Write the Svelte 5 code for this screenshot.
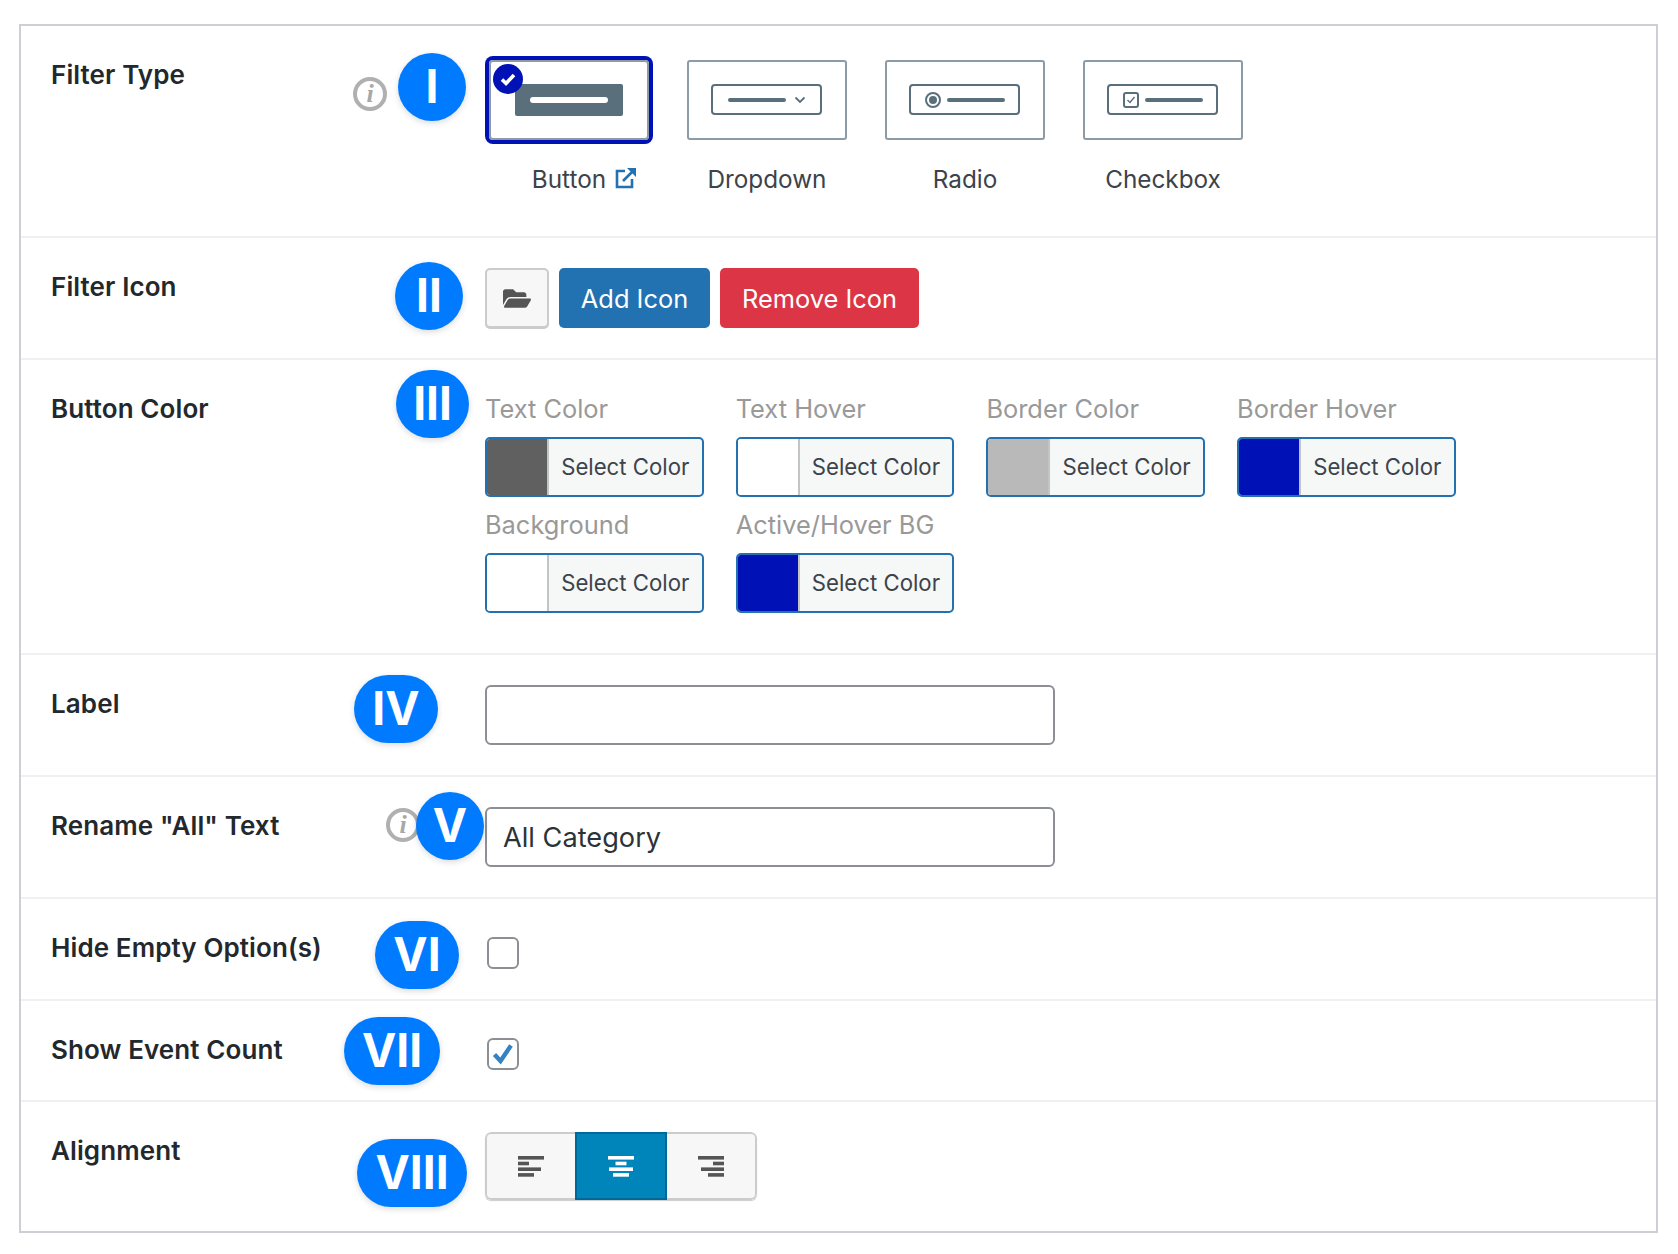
<script lang="ts">
  const filterTypes = ['Button', 'Dropdown', 'Radio', 'Checkbox'];

  const colors = [
    { label: 'Text Color', value: '#606060' },
    { label: 'Text Hover', value: '#ffffff' },
    { label: 'Border Color', value: '#b9b9b9' },
    { label: 'Border Hover', value: '#0012b5' },
    { label: 'Background', value: '#ffffff' },
    { label: 'Active/Hover BG', value: '#0012b5' }
  ];

  const alignBars = [
    [26, 11, 23, 16],
    [26, 11, 24, 16],
    [26, 11, 23, 16]
  ];

  // x offset of a bar inside the 26px wide icon, per alignment
  function barX(index: number, width: number) {
    if (index === 0) return 0;
    if (index === 1) return (26 - width) / 2;
    return 26 - width;
  }
</script>

<div class="panel">
  <section class="row row-type">
    <div class="label">Filter Type</div>
    <span class="info info-type">i</span>
    <span class="badge b1">I</span>
    <div class="types">
      {#each filterTypes as type, i}
        <div class="type">
          <div class="card" class:selected={i === 0}>
            {#if i === 0}
              <span class="tick">
                <svg width="30" height="30" viewBox="0 0 30 30">
                  <path d="M9 15.5l4 4 8-8.5" fill="none" stroke="#fff" stroke-width="3.6" />
                </svg>
              </span>
            {/if}
            <svg width="156" height="76" viewBox="2 2 156 76">
              {#if i === 0}
                <rect x="26" y="24" width="108" height="32" rx="2" fill="#5a6f7c" />
                <rect x="41" y="37" width="78" height="6" rx="3" fill="#fff" />
              {:else}
                <rect x="25" y="25" width="109" height="29" rx="3" fill="none" stroke="#5a6f7c" stroke-width="2" />
              {/if}
              {#if i === 1}
                <rect x="41" y="38" width="58" height="4" rx="2" fill="#5a6f7c" />
                <path d="M108.500 37.500l4.500 4.500 4.500-4.500" fill="none" stroke="#5a6f7c" stroke-width="1.800" />
              {:else if i === 2}
                <circle cx="48" cy="40" r="7" fill="none" stroke="#5a6f7c" stroke-width="2" />
                <circle cx="48" cy="40" r="4" fill="#5a6f7c" />
                <rect x="62" y="38" width="58" height="4" rx="2" fill="#5a6f7c" />
              {:else if i === 3}
                <rect x="41" y="33" width="14" height="14" rx="2" fill="none" stroke="#5a6f7c" stroke-width="2" />
                <path d="M44.500 40l2.500 2.500 4.500-5.500" fill="none" stroke="#5a6f7c" stroke-width="1.400" />
                <rect x="62" y="38" width="58" height="4" rx="2" fill="#5a6f7c" />
              {/if}
            </svg>
          </div>
          <div class="type-name">
            {type}
            {#if i === 0}
              <svg class="ext" width="22" height="22" viewBox="0 0 22 22">
                <path d="M10 4H2v16h15v-8" fill="none" stroke="#2271b1" stroke-width="2.600" />
                <path d="M8 14L18 4" fill="none" stroke="#2271b1" stroke-width="2.600" />
                <path d="M12 1h9v9z" fill="#2271b1" />
              </svg>
            {/if}
          </div>
        </div>
      {/each}
    </div>
  </section>

  <section class="row row-std">
    <div class="label">Filter Icon</div>
    <span class="badge b2">II</span>
    <div class="icon-actions">
      <button class="icon-btn" aria-label="Choose icon">
        <svg width="28" height="25" viewBox="0 0 576 512">
          <path fill="#555" d="M572.694 292.093L500.27 416.248A63.997 63.997 0 0 1 444.989 448H45.025c-18.523 0-30.064-20.093-20.731-36.093l72.424-124.155A64 64 0 0 1 152 256h399.964c18.523 0 30.064 20.093 20.73 36.093zM152 224h328v-48c0-26.51-21.49-48-48-48H272l-64-64H48C21.49 64 0 85.49 0 112v278.046l69.077-118.418C86.214 242.25 117.989 224 152 224z" />
        </svg>
      </button>
      <button class="action add">Add Icon</button>
      <button class="action remove">Remove Icon</button>
    </div>
  </section>

  <section class="row row-color">
    <div class="label">Button Color</div>
    <span class="badge b3">III</span>
    <div class="colors">
      {#each colors as color}
        <div class="color">
          <div class="color-label">{color.label}</div>
          <div class="picker">
            <span class="swatch" style="background: {color.value}"></span>
            <span class="picker-text">Select Color</span>
          </div>
        </div>
      {/each}
    </div>
  </section>

  <section class="row row-std">
    <div class="label">Label</div>
    <span class="badge b4">IV</span>
    <input class="text-input" type="text" />
  </section>

  <section class="row row-std">
    <div class="label">Rename "All" Text</div>
    <span class="info info-rename">i</span>
    <span class="badge b5">V</span>
    <input class="text-input" type="text" value="All Category" />
  </section>

  <section class="row row-hide">
    <div class="label">Hide Empty Option(s)</div>
    <span class="badge b6">VI</span>
    <span class="checkbox"></span>
  </section>

  <section class="row row-count">
    <div class="label">Show Event Count</div>
    <span class="badge b7">VII</span>
    <span class="checkbox">
      <svg width="28" height="28" viewBox="0 0 28 28">
        <path d="M5.500 14.500l6 6.500L22 5.500" fill="none" stroke="#3582c4" stroke-width="4.400" />
      </svg>
    </span>
  </section>

  <section class="row row-align">
    <div class="label">Alignment</div>
    <span class="badge b8">VIII</span>
    <div class="align-group">
      {#each alignBars as bars, i}
        <button class="align" class:active={i === 1} aria-label="Align">
          <svg width="26" height="21" viewBox="0 0 26 21">
            {#each bars as width, n}
              <rect x={barX(i, width)} y={n * 5.700} {width} height="3.600" fill="currentColor" />
            {/each}
          </svg>
        </button>
      {/each}
    </div>
  </section>
</div>

<style>
  :global(body) {
    margin: 0;
    background: #fff;
    font-family: Inter, "Liberation Sans", sans-serif;
  }

  .panel {
    box-sizing: border-box;
    width: 1639px;
    margin: 24px 0 0 19px;
    border: 2px solid #ccd0d4;
  }

  .row {
    position: relative;
    box-sizing: border-box;
    display: grid;
    grid-template-columns: 434px 1fr;
    align-items: start;
    padding: 30px 0 0 30px;
    border-bottom: 2px solid #f0f0f1;
  }

  .row:last-child {
    border-bottom: 0;
  }

  .row-type {
    height: 212px;
  }

  .row-std {
    height: 122px;
  }

  .row-color {
    height: 295px;
  }

  .row-hide {
    height: 102px;
  }

  .row-count {
    height: 101px;
  }

  .row-align {
    height: 129px;
  }

  .label {
    padding-top: 2px;
    font-size: 26px;
    line-height: 34px;
    font-weight: 600;
    color: #23282d;
    letter-spacing: 0.1px;
  }

  .badge {
    position: absolute;
    box-sizing: border-box;
    height: 68px;
    padding-bottom: 3px;
    border-radius: 34px;
    display: flex;
    align-items: center;
    justify-content: center;
    background: #007bff;
    box-shadow: 0 2px 6px rgba(0, 0, 0, 0.15);
    color: #fff;
    font-size: 46px;
    font-weight: 700;
    line-height: 1;
  }

  .b1 { left: 377px; top: 27px; width: 68px; }
  .b2 { left: 374px; top: 24px; width: 68px; }
  .b3 { left: 375px; top: 10px; width: 73px; }
  .b4 { left: 333px; top: 20px; width: 84px; }
  .b5 { left: 395px; top: 15px; width: 68px; }
  .b6 { left: 354px; top: 22px; width: 84px; }
  .b7 { left: 323px; top: 16px; width: 96px; }
  .b8 { left: 336px; top: 37px; width: 110px; }

  .info {
    position: absolute;
    box-sizing: border-box;
    width: 34px;
    height: 34px;
    border: 4px solid #b0b0b0;
    border-radius: 50%;
    display: flex;
    align-items: center;
    justify-content: center;
    color: #a8a8a8;
    font-family: "Liberation Serif", serif;
    font-style: italic;
    font-weight: 700;
    font-size: 26px;
    line-height: 1;
  }

  .info-type { left: 332px; top: 51px; }
  .info-rename { left: 365px; top: 31px; }

  .types {
    display: flex;
    gap: 38px;
    padding: 4px 0 0 4px;
  }

  .type {
    width: 160px;
  }

  .card {
    position: relative;
    box-sizing: border-box;
    width: 160px;
    height: 80px;
    border: 2px solid #8d9ba6;
    border-radius: 3px;
  }

  .card svg {
    display: block;
  }

  .card.selected {
    box-shadow: 0 0 0 4px #0012b5;
    border-radius: 4px;
  }

  .tick {
    position: absolute;
    left: 2px;
    top: 2px;
    width: 30px;
    height: 30px;
    border-radius: 50%;
    background: #0012b5;
  }

  .type-name {
    position: relative;
    margin-top: 24px;
    text-align: center;
    font-size: 24.300px;
    line-height: 30px;
    color: #3c434a;
  }

  .ext {
    position: absolute;
    left: 126px;
    top: 3px;
  }

  .icon-actions {
    display: flex;
    gap: 10px;
  }

  .icon-btn {
    box-sizing: border-box;
    width: 64px;
    height: 60px;
    display: flex;
    align-items: center;
    justify-content: center;
    padding: 0;
    background: #f7f7f7;
    border: 2px solid #ccc;
    border-radius: 5px;
    box-shadow: 0 1px 0 #ccc;
  }

  .action {
    height: 60px;
    border: 0;
    border-radius: 5px;
    padding: 0;
    color: #fff;
    font-family: inherit;
    font-size: 25.400px;
  }

  .add {
    width: 151px;
    background: #2271b1;
  }

  .remove {
    width: 199px;
    background: #dc3545;
  }

  .colors {
    display: grid;
    grid-template-columns: repeat(4, 218.500px);
    column-gap: 32.200px;
    row-gap: 11px;
    margin-top: 2px;
  }

  .color-label {
    font-size: 25.400px;
    line-height: 34px;
    margin-bottom: 11px;
    color: #999;
  }

  .picker {
    box-sizing: border-box;
    height: 60px;
    display: flex;
    overflow: hidden;
    border: 2px solid #2271b1;
    border-radius: 5px;
    background: #f6f7f7;
  }

  .swatch {
    box-sizing: border-box;
    width: 62px;
    border-right: 2px solid #c3c4c7;
  }

  .picker-text {
    flex: 1;
    text-align: center;
    align-self: center;
    padding-bottom: 1px;
    font-size: 22.200px;
    color: #3c434a;
  }

  .text-input {
    box-sizing: border-box;
    width: 570px;
    height: 60px;
    padding: 0 16px;
    border: 2px solid #8c8f94;
    border-radius: 6px;
    background: #fff;
    outline: 0;
    font-family: inherit;
    font-size: 27.200px;
    color: #2c3338;
  }

  .checkbox {
    box-sizing: border-box;
    width: 32px;
    height: 32px;
    margin: 7px 0 0 2px;
    display: block;
    border: 2px solid #8c8f94;
    border-radius: 6px;
    background: #fff;
  }

  .row-hide .checkbox {
    margin-top: 8px;
  }

  .checkbox svg {
    display: block;
  }

  .align-group {
    display: flex;
    width: 272px;
    height: 68px;
    border-radius: 6px;
    box-shadow: 0 1px 1px #ccc;
    overflow: hidden;
  }

  .align {
    box-sizing: border-box;
    flex: 1;
    display: flex;
    align-items: center;
    justify-content: center;
    padding: 0;
    background: #f7f7f7;
    border: 2px solid #ccc;
    color: #555;
  }

  .align:first-child {
    border-right: 0;
    border-radius: 6px 0 0 6px;
  }

  .align:last-child {
    border-left: 0;
    border-radius: 0 6px 6px 0;
  }

  .align.active {
    flex: 0 0 92px;
    background: #0085ba;
    border: 2px solid #006799;
    color: #fff;
  }
</style>
